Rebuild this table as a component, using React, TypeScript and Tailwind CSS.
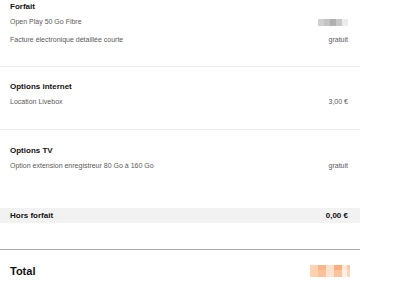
import React from "react";

const font = { fontFamily: '"Liberation Sans", Arial, sans-serif' };

function Row({ label, value }: { label: string; value: React.ReactNode }) {
  return (
    <div className="flex h-[18px] items-center justify-between pl-[10px] pr-[12px] text-[7px] text-[#5a5a5a]">
      <span>{label}</span>
      <span>{value}</span>
    </div>
  );
}

function Heading({ children }: { children: React.ReactNode }) {
  return (
    <div className="flex h-[13px] items-center pl-[10px] text-[8px] font-bold text-[#111]">
      {children}
    </div>
  );
}

function GrayBlur() {
  return (
    <div className="flex h-[7px] w-[30px] blur-[0.6px]">
      <div className="h-full w-[6px] bg-[#d0d0d0]" />
      <div className="h-full w-[6px] bg-[#c4c4c4]" />
      <div className="h-full w-[6px] bg-[#b0b0b0]" />
      <div className="h-full w-[6px] bg-[#c8c8c8]" />
      <div className="h-full w-[6px] bg-[#ececec]" />
    </div>
  );
}

function OrangeBlur() {
  return (
    <div className="flex h-[12px] w-[40px] flex-col blur-[0.6px]">
      <div className="flex h-[5px]">
        <div className="h-full w-[8px] bg-[#fcd3b5]" />
        <div className="h-full w-[8px] bg-[#f9b78a]" />
        <div className="h-full w-[8px] bg-[#fde0cb]" />
        <div className="h-full w-[8px] bg-[#f8ae7c]" />
        <div className="h-full w-[5px] bg-[#fde8d8]" />
        <div className="h-full w-[3px] bg-[#fbcba8]" />
      </div>
      <div className="flex h-[7px]">
        <div className="h-full w-[8px] bg-[#fcd0b0]" />
        <div className="h-full w-[8px] bg-[#fbc29a]" />
        <div className="h-full w-[8px] bg-[#fde3cf]" />
        <div className="h-full w-[8px] bg-[#fac49e]" />
        <div className="h-full w-[5px] bg-[#feefe3]" />
        <div className="h-full w-[3px] bg-[#fcd6bb]" />
      </div>
    </div>
  );
}

export default function App() {
  return (
    <div className="h-[287px] w-[400px] overflow-hidden bg-white" style={font}>
      <div className="w-[360px]">
        <div className="border-b border-[#ececec] pb-[17px]">
          <Heading>Forfait</Heading>
          <Row label="Open Play 50 Go Fibre" value={<GrayBlur />} />
          <Row label="Facture électronique détaillée courte" value="gratuit" />
        </div>
        <div className="border-b border-[#ececec] pb-[18px] pt-[13px]">
          <Heading>Options internet</Heading>
          <Row label="Location Livebox" value="3,00 €" />
        </div>
        <div className="pt-[14px]">
          <Heading>Options TV</Heading>
          <Row label="Option extension enregistreur 80 Go à 160 Go" value="gratuit" />
        </div>
        <div className="mt-[33px] flex h-[15px] items-center justify-between bg-[#f2f2f2] pl-[10px] pr-[12px] text-[8px] font-bold text-[#111]">
          <span>Hors forfait</span>
          <span>0,00 €</span>
        </div>
        <div className="mt-[26px] border-t border-[#a8a8a8]" />
        <div className="mt-[14px] flex h-[14px] items-center justify-between pl-[10px] pr-[10px]">
          <span className="text-[11px] font-bold text-[#111]">Total</span>
          <OrangeBlur />
        </div>
      </div>
    </div>
  );
}
